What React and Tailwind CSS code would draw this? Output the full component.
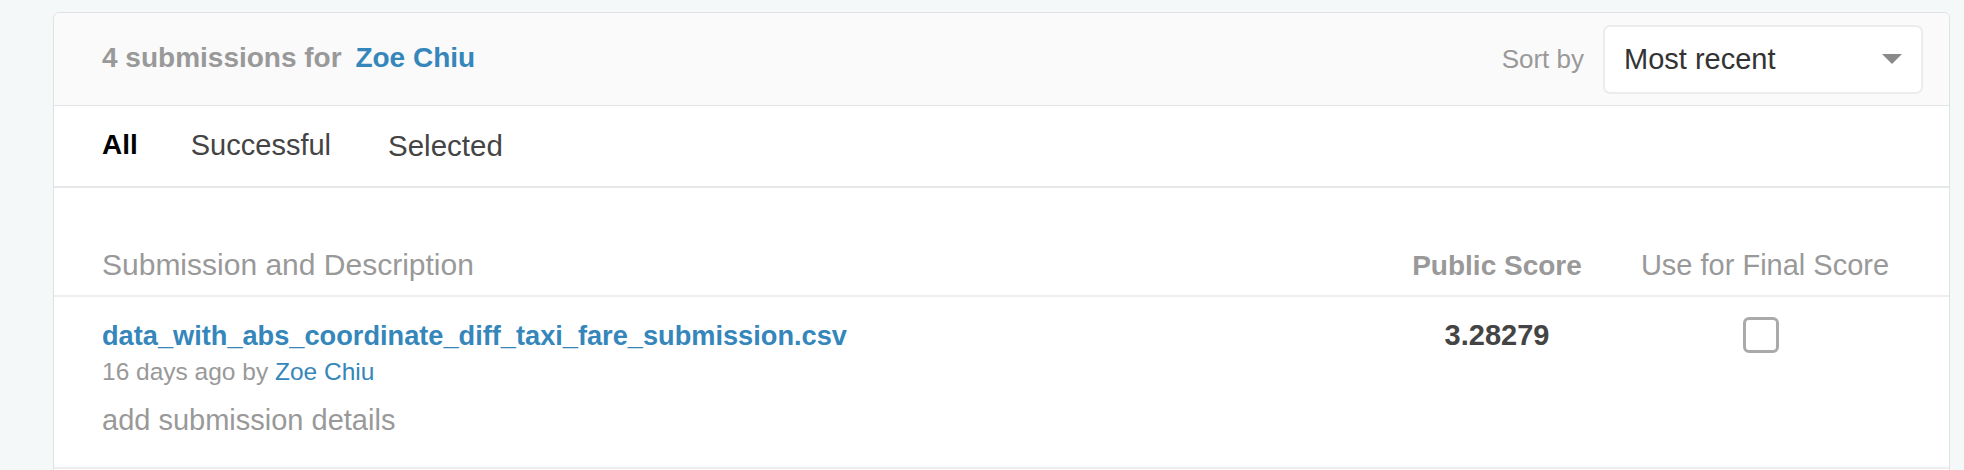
export default function App() {
  const font = { fontFamily: '"Liberation Sans", Arial, sans-serif' };
  return (
    <div className="min-h-[470px] bg-[#f5f8f9] pt-[12px] pl-[53px] pr-[14px] overflow-hidden" style={font}>
      <div className="w-[1897px] rounded-t-[6px] border border-[#dfe1e2] bg-white pb-[40px]">
        {/* Header */}
        <div className="flex h-[93px] items-center justify-between rounded-t-[6px] border-b border-[#e4e5e6] bg-[#fafafa] pl-[48px] pr-[26px]">
          <div className="mb-[2px] text-[28px] font-bold leading-none text-[#999999]">
            4 submissions for <span className="ml-[6px] text-[#3586ba]">Zoe Chiu</span>
          </div>
          <div className="flex items-center gap-[19px]">
            <span className="text-[26px] leading-none text-[#999999]">Sort by</span>
            <div className="flex h-[69px] w-[320px] items-center justify-between rounded-[7px] border-2 border-[#ececec] bg-white pl-[19px] pr-[19px]">
              <span className="text-[29px] leading-none text-[#333333]">Most recent</span>
              <svg width="20" height="10" viewBox="0 0 20 10"><path d="M0 0 L20 0 L10 10 Z" fill="#8a8a8a" /></svg>
            </div>
          </div>
        </div>
        {/* Tabs */}
        <div className="flex h-[82px] items-start border-b-2 border-[#e6e7e8] pl-[48px] pt-[25px]">
          <span className="text-[28px] font-bold leading-none text-black">All</span>
          <span className="ml-[53px] text-[29px] leading-none text-[#444444]">Successful</span>
          <span className="ml-[57px] text-[29.5px] leading-none text-[#444444]">Selected</span>
        </div>
        {/* Column headers */}
        <div className="flex h-[109px] items-end border-b-2 border-[#eeeeee] pl-[48px] pr-[29px] pb-[15px]">
          <div className="flex-1 text-[30px] leading-none text-[#999999]">Submission and Description</div>
          <div className="w-[200px] text-center text-[28px] font-bold leading-none text-[#999999]">Public Score</div>
          <div className="ml-[13px] w-[310px] text-center text-[29px] leading-none text-[#999999]">Use for Final Score</div>
        </div>
        {/* Row */}
        <div className="flex border-b-2 border-[#eeeeee] pl-[48px] pr-[29px]">
          <div className="flex-1 pt-[25px] pb-[32px]">
            <div className="text-[27.2px] font-bold leading-none text-[#3586ba]">data_with_abs_coordinate_diff_taxi_fare_submission.csv</div>
            <div className="mt-[11px] text-[24.5px] leading-none text-[#999999]">
              16 days ago by <span className="text-[#3586ba]">Zoe Chiu</span>
            </div>
            <div className="mt-[21px] text-[29px] leading-none text-[#999999]">add submission details</div>
          </div>
          <div className="w-[200px] pt-[24px] text-center text-[29px] font-bold leading-none text-[#444444]">3.28279</div>
          <div className="ml-[13px] flex w-[310px] justify-center pt-[20px]">
            <div className="ml-[-8px] h-[36px] w-[36px] rounded-[6px] border-[3px] border-[#aaaaaa] bg-white" />
          </div>
        </div>
      </div>
    </div>
  );
}
